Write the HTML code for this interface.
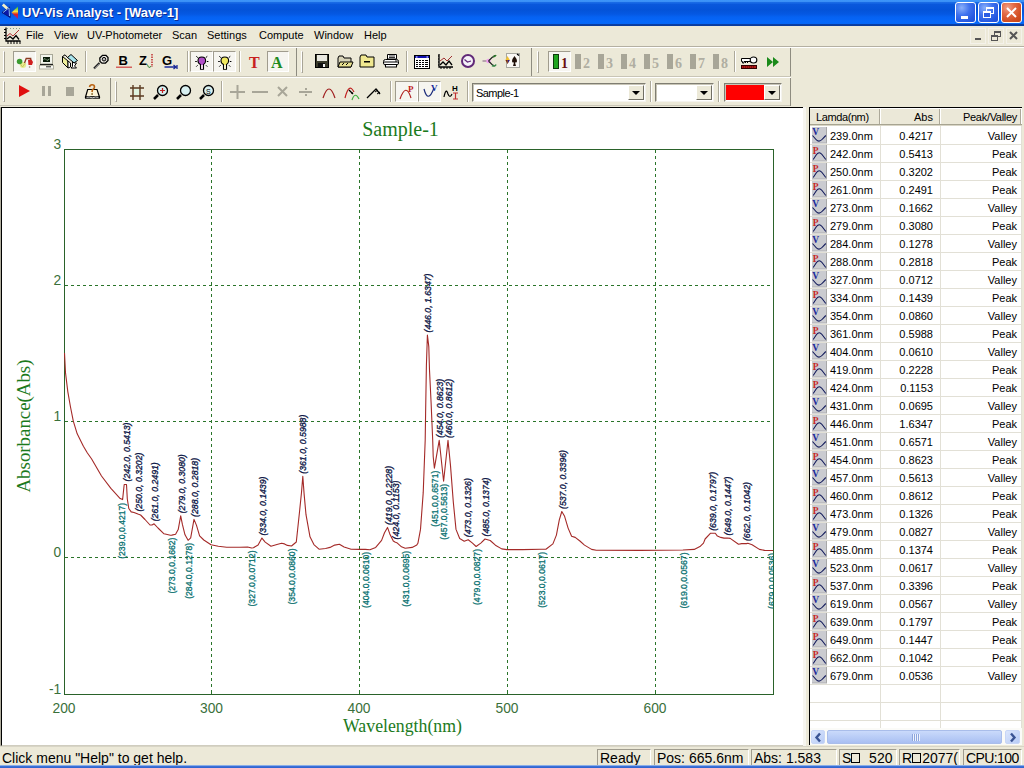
<!DOCTYPE html><html><head><meta charset="utf-8"><style>
*{margin:0;padding:0;box-sizing:border-box}
html,body{width:1024px;height:768px;overflow:hidden;background:#ECE9D8;font-family:"Liberation Sans",sans-serif;position:relative}
.a{position:absolute}
#title{left:0;top:0;width:1024px;height:26px;background:linear-gradient(to bottom,#3C95FA 0px,#3A8EF5 2px,#1767E0 2px,#1A6EEA 3px,#0A58DC 4px,#0453D8 10px,#0558E2 14px,#0662F2 17px,#0668FA 22px,#0566F5 24px,#0A40A8 24px,#0A3A9A 26px)}
.mi{top:29px;font-size:11px;line-height:13px;color:#000;white-space:nowrap}
.grip{width:2px;border-left:1px solid #fff;border-top:1px solid #fff;border-right:1px solid #A8A496;border-bottom:1px solid #A8A496}
.sep{width:2px;border-left:1px solid #ACA899;border-right:1px solid #fff}
.btnp{background:#F6F5F0;border:1px solid;border-color:#A09C8E #fff #fff #A09C8E}
.tbend{width:1px;background:#8E8C80}
.ic{width:16px;height:16px;overflow:visible}
.st{top:749px;height:16px;border-top:1px solid #A09C8E;border-left:1px solid #A09C8E;border-right:1px solid #fff;font-size:14px;line-height:16px;color:#000;white-space:nowrap;padding-left:2px;overflow:hidden}
.tr{font-size:11px;color:#000;white-space:nowrap;line-height:13px}
</style></head><body>
<div id="title" class="a"></div>
<div class="a" style="left:2px;top:3px;width:17px;height:18px"><svg width="17" height="18" viewBox="0 0 17 18" style="display:block;overflow:visible"><defs><linearGradient id="rbw" x1="0" y1="0" x2="0" y2="1"><stop offset="0" stop-color="#20C040"/><stop offset="0.4" stop-color="#F0E040"/><stop offset="0.62" stop-color="#E02020"/><stop offset="1" stop-color="#9020A0"/></linearGradient></defs><path d="M0,9.5 L7.5,4 L8.2,14.5 Z" fill="#0A18A8" stroke="#06106A" stroke-width="0.8"/><path d="M1,9.5 L7,4.8 L7.5,13" fill="none" stroke="#98D0FA" stroke-width="0.9"/><path d="M0.8,1.5 L5.2,5.5" stroke="#F4F0C8" stroke-width="2.8"/><path d="M9.5,9.5 L16,3.5 L16,16 Z" fill="url(#rbw)"/></svg></div>
<div class="a" style="left:22px;top:5px;font:bold 13px/16px 'Liberation Sans',sans-serif;color:#fff;text-shadow:1px 1px 0 #0C2C96;white-space:nowrap">UV-Vis Analyst - [Wave-1]</div>
<div class="a" style="left:955px;top:2px;width:21px;height:21px;border:1px solid #fff;border-radius:3px;background:radial-gradient(circle at 30% 25%,#8AB0FA 0,#3F72EE 40%,#2558E0 75%,#1E50D8 100%)"><svg width="19" height="19" viewBox="0 0 19 19" style="display:block;overflow:visible"><rect x="5" y="13" width="7" height="3" fill="#fff"/></svg></div>
<div class="a" style="left:978px;top:2px;width:21px;height:21px;border:1px solid #fff;border-radius:3px;background:radial-gradient(circle at 30% 25%,#8AB0FA 0,#3F72EE 40%,#2558E0 75%,#1E50D8 100%)"><svg width="19" height="19" viewBox="0 0 19 19" style="display:block;overflow:visible"><rect x="7.5" y="4.5" width="7" height="6" fill="none" stroke="#fff" stroke-width="1"/><rect x="7" y="4" width="8" height="2" fill="#fff"/><rect x="4.5" y="8.5" width="7" height="6" fill="#2A5CE4" stroke="#fff" stroke-width="1"/><rect x="4" y="8" width="8" height="2" fill="#fff"/></svg></div>
<div class="a" style="left:1001px;top:2px;width:21px;height:21px;border:1px solid #fff;border-radius:3px;background:radial-gradient(circle at 30% 25%,#F0A088 0,#E26A45 35%,#D24E22 70%,#C24418 100%)"><svg width="19" height="19" viewBox="0 0 19 19" style="display:block;overflow:visible"><path d="M5,5 L14,14 M14,5 L5,14" stroke="#fff" stroke-width="2"/></svg></div>
<div class="a" style="left:4px;top:27px;width:18px;height:17px"><svg width="17" height="17" viewBox="0 0 17 17" style="display:block;overflow:visible"><path d="M2,0.5 V14 H16.5" fill="none" stroke="#000" stroke-width="1.3"/><path d="M0,2.5H2M0,5.5H2M0,8.5H2M0,11.5H2M4,14V17M7,14V17M10,14V17M13,14V17M16,14V17" stroke="#000" stroke-width="1"/><path d="M3,9 L6,6.5 L9,9 L15,3" fill="none" stroke="#B03030" stroke-width="1"/><path d="M3,12 L6,9.5 L9,12 L12,8.5 L15,12.5" fill="none" stroke="#000" stroke-width="1.3"/><path d="M3,1.5H16" stroke="#8AA08A" stroke-width="1" stroke-dasharray="1,2"/></svg></div>
<div class="a mi" style="left:26px">File</div>
<div class="a mi" style="left:54px">View</div>
<div class="a mi" style="left:87px">UV-Photometer</div>
<div class="a mi" style="left:172px">Scan</div>
<div class="a mi" style="left:207px">Settings</div>
<div class="a mi" style="left:259px">Compute</div>
<div class="a mi" style="left:314px">Window</div>
<div class="a mi" style="left:364px">Help</div>
<div class="a" style="left:970px;top:28px;width:16px;height:16px"><svg width="16" height="16" viewBox="0 0 16 16" style="display:block;overflow:visible"><rect x="0.5" y="0.5" width="15" height="15" fill="none" stroke="#F4F2EA"/><rect x="5" y="10" width="6" height="2" fill="#555"/></svg></div>
<div class="a" style="left:988px;top:28px;width:16px;height:16px"><svg width="16" height="16" viewBox="0 0 16 16" style="display:block;overflow:visible"><rect x="0.5" y="0.5" width="15" height="15" fill="none" stroke="#F4F2EA"/><rect x="6.5" y="3.5" width="6" height="5" fill="none" stroke="#555"/><rect x="6" y="3" width="7" height="2" fill="#555"/><rect x="3.5" y="7.5" width="6" height="5" fill="#ECE9D8" stroke="#555"/><rect x="3" y="7" width="7" height="2" fill="#555"/></svg></div>
<div class="a" style="left:1006px;top:28px;width:16px;height:16px"><svg width="16" height="16" viewBox="0 0 16 16" style="display:block;overflow:visible"><rect x="0.5" y="0.5" width="15" height="15" fill="none" stroke="#F4F2EA"/><path d="M4,4 L11,11 M11,4 L4,11" stroke="#555" stroke-width="2"/></svg></div>
<div class="a" style="left:0;top:46px;width:1024px;height:1px;background:#B4B0A2"></div>
<div class="a" style="left:0;top:47px;width:1024px;height:1px;background:#FFFFFF"></div>
<div class="a" style="left:0;top:76px;width:791px;height:1px;background:#C9C5B6"></div>
<div class="a" style="left:0;top:77px;width:791px;height:1px;background:#FFFFFF"></div>
<div class="a" style="left:0;top:105px;width:791px;height:1px;background:#C9C5B6"></div>
<div class="a grip" style="left:3px;top:51px;height:22px"></div>
<div class="a btnp" style="left:13px;top:51px;width:23px;height:21px"></div>
<div class="a" style="left:17px;top:54px;width:16px;height:16px"><svg width="16" height="16" viewBox="0 0 16 16" style="display:block;overflow:visible"><ellipse cx="6" cy="11" rx="3.2" ry="3" fill="#E8EC90"/><path d="M3.5,10 L5.5,13 L8,9.5" fill="none" stroke="#C8C860" stroke-width="1"/><ellipse cx="2.6" cy="7.5" rx="2.8" ry="2.8" fill="#3C9A30"/><path d="M7.5,9 L9.2,4.5 L13.7,4.5 L13.7,6" fill="none" stroke="#8A3A20" stroke-width="1.3"/><path d="M11,6 L14.5,5.5 L16,8 L15,11 L11.5,11 Z" fill="#D02020"/><circle cx="12.6" cy="13" r="0.8" fill="#9A7A70"/></svg></div>
<div class="a" style="left:38px;top:54px;width:16px;height:16px"><svg width="16" height="16" viewBox="0 0 16 16" style="display:block;overflow:visible"><rect x="2.5" y="0.5" width="12" height="9.5" fill="#F2F4EC" stroke="#A8A898"/><rect x="5" y="3" width="7" height="5" fill="#081808"/><path d="M5.5,5.5 L7,4.5 L9,6.5 L11.5,5" stroke="#9ABE9A" stroke-width="0.8" fill="none"/><rect x="2" y="10" width="13" height="1.4" fill="#101010"/><rect x="1.5" y="11.4" width="14" height="3.6" fill="#F8F8F2" stroke="#B0B0A0"/><rect x="8" y="12.3" width="5" height="1" fill="#222"/></svg></div>
<div class="a" style="left:62px;top:54px;width:16px;height:16px"><svg width="16" height="16" viewBox="0 0 16 16" style="display:block;overflow:visible"><path d="M0.5,2.5 L0.5,8.5 L6,14 L6,7 Z" fill="#EEEE9A" stroke="#000"/><path d="M0.5,2.5 L3,0.8 L6,4" fill="none" stroke="#000"/><path d="M5.5,3.5 L9,0.5 L15.5,6.5 L12,8.8 Z" fill="#A8E4EC" stroke="#000"/><path d="M6,7 L8.5,9 L8.5,13 L6,14 Z" fill="#fff" stroke="#000"/><path d="M10.5,8 L10.5,12.5 L9,14 L14.5,14 L12.5,12 L14.5,9 L12,8.8 Z" fill="#fff" stroke="#000"/></svg></div>
<div class="a sep" style="left:85px;top:51px;height:21px"></div>
<div class="a" style="left:93px;top:54px;width:16px;height:16px"><svg width="16" height="16" viewBox="0 0 16 16" style="display:block;overflow:visible"><path d="M1,14.5 L6.5,9" stroke="#222" stroke-width="2.2"/><path d="M1.8,14.5 L6.5,9.8" stroke="#ddd" stroke-width="0.7"/><path d="M7,7.5 L6.8,4 L9.5,1.3 L13,1.3 L15,3.5 L15,6.5 L12.5,9 L9,9.2 Z" fill="#F0EEE6" stroke="#000" stroke-width="1.3"/><circle cx="11" cy="5.2" r="1.8" fill="#bbb" stroke="#000" stroke-width="1"/></svg></div>
<div class="a" style="left:116px;top:54px;width:16px;height:16px"><svg width="16" height="16" viewBox="0 0 16 16" style="display:block;overflow:visible"><text x="2.6" y="10.6" font-family="Liberation Sans" font-weight="bold" font-size="13" fill="#000">B</text><rect x="0" y="12.6" width="16" height="1.2" fill="#D04040"/></svg></div>
<div class="a" style="left:139px;top:54px;width:16px;height:16px"><svg width="16" height="16" viewBox="0 0 16 16" style="display:block;overflow:visible"><text x="0" y="10.6" font-family="Liberation Sans" font-size="13" fill="#000" font-weight="bold">Z</text><path d="M8.5,10.5 Q8.5,13.5 11,13.5 L12,12" stroke="#3A8A3A" fill="none"/><path d="M13,0 V13" stroke="#C03030" stroke-width="1.5" stroke-dasharray="1.5,1"/></svg></div>
<div class="a" style="left:162px;top:54px;width:16px;height:16px"><svg width="16" height="16" viewBox="0 0 16 16" style="display:block;overflow:visible"><text x="0" y="10.6" font-family="Liberation Sans" font-weight="bold" font-size="13" fill="#000">G</text><path d="M2.5,13 H14 M11.5,11 L14,13 L11.5,15 M15,11 V15" stroke="#1A2A9A" stroke-width="1.3" fill="none"/></svg></div>
<div class="a sep" style="left:187px;top:51px;height:21px"></div>
<div class="a btnp" style="left:190px;top:51px;width:23px;height:21px"></div>
<div class="a btnp" style="left:213px;top:51px;width:23px;height:21px"></div>
<div class="a" style="left:193px;top:54px;width:16px;height:16px"><svg width="16" height="16" viewBox="0 0 16 16" style="display:block;overflow:visible"><path d="M7.5,15.3 L7.5,10.5 Q5,9.5 5,6.8 Q5,3 8.8,3 Q12.6,3 12.6,6.8 Q12.6,9.5 10.5,10.5 L10.5,15.3 Z" fill="#B050C8" stroke="#000" stroke-width="1.1"/><rect x="8.2" y="11" width="1.6" height="4" fill="#FAF6F0"/><path d="M3.3,2.3 L4.8,3.6 M14.3,2.3 L12.8,3.6 M2.2,7.5 H3.8 M13.8,7.5 H15.4 M3.3,12.6 L4.6,11.3 M14.3,12.6 L13,11.3" stroke="#000" stroke-width="1"/></svg></div>
<div class="a" style="left:216px;top:54px;width:16px;height:16px"><svg width="16" height="16" viewBox="0 0 16 16" style="display:block;overflow:visible"><path d="M7.5,15.3 L7.5,10.5 Q5,9.5 5,6.8 Q5,3 8.8,3 Q12.6,3 12.6,6.8 Q12.6,9.5 10.5,10.5 L10.5,15.3 Z" fill="#F0E860" stroke="#000" stroke-width="1.1"/><rect x="8.2" y="11" width="1.6" height="4" fill="#FAF6F0"/><path d="M3.3,2.3 L4.8,3.6 M14.3,2.3 L12.8,3.6 M2.2,7.5 H3.8 M13.8,7.5 H15.4 M3.3,12.6 L4.6,11.3 M14.3,12.6 L13,11.3" stroke="#000" stroke-width="1"/></svg></div>
<div class="a sep" style="left:239px;top:51px;height:21px"></div>
<div class="a" style="left:247px;top:54px;width:16px;height:16px"><svg width="16" height="16" viewBox="0 0 16 16" style="display:block;overflow:visible"><text x="2" y="14" font-family="Liberation Serif" font-weight="bold" font-size="16" fill="#C82020">T</text></svg></div>
<div class="a btnp" style="left:267px;top:51px;width:22px;height:21px"></div>
<div class="a" style="left:270px;top:54px;width:16px;height:16px"><svg width="16" height="16" viewBox="0 0 16 16" style="display:block;overflow:visible"><text x="1" y="14" font-family="Liberation Serif" font-weight="bold" font-size="16" fill="#208A20">A</text></svg></div>
<div class="a tbend" style="left:296px;top:48px;height:28px"></div>
<div class="a grip" style="left:301px;top:51px;height:22px"></div>
<div class="a" style="left:314px;top:53px;width:16px;height:16px"><svg width="16" height="16" viewBox="0 0 16 16" style="display:block;overflow:visible"><rect x="1.5" y="1.5" width="13" height="13" fill="#3A3A2A" stroke="#000"/><rect x="3" y="2" width="10" height="6" fill="#E8E8E0"/><rect x="4" y="10" width="7" height="4" fill="#101010"/><rect x="9" y="11" width="2" height="3" fill="#F0F0F0"/></svg></div>
<div class="a" style="left:337px;top:53px;width:16px;height:16px"><svg width="16" height="16" viewBox="0 0 16 16" style="display:block;overflow:visible"><path d="M1,5 L2,3 L6,3 L7,5 L14,5 L14,14 L1,14Z" fill="#D8D4B8" stroke="#000"/><path d="M3,9 L16,9 L14,14 L1,14Z" fill="#E8E090" stroke="#000"/><path d="M5,12 L7,10 M9,12 L11,10" stroke="#000"/></svg></div>
<div class="a" style="left:359px;top:53px;width:16px;height:16px"><svg width="16" height="16" viewBox="0 0 16 16" style="display:block;overflow:visible"><path d="M1,4 L2,2 L7,2 L8,4 L15,4 L15,14 L1,14Z" fill="#F0E890" stroke="#000"/><rect x="5" y="8" width="6" height="1.5" fill="#000"/></svg></div>
<div class="a" style="left:383px;top:53px;width:16px;height:16px"><svg width="16" height="16" viewBox="0 0 16 16" style="display:block;overflow:visible"><path d="M4.5,1.5 L13.5,1.5 L13.5,6 L4.5,6Z" fill="#fff" stroke="#000"/><path d="M6,3H12M6,4.5H12" stroke="#000" stroke-width="0.8"/><rect x="0.5" y="6.5" width="15" height="5.5" rx="2" fill="#fff" stroke="#000"/><path d="M1,9H15" stroke="#000"/><rect x="2.5" y="11.5" width="11" height="2.5" fill="#fff" stroke="#000"/><circle cx="13" cy="8" r="0.8" fill="#000"/></svg></div>
<div class="a sep" style="left:406px;top:51px;height:21px"></div>
<div class="a" style="left:414px;top:54px;width:16px;height:16px"><svg width="16" height="16" viewBox="0 0 16 16" style="display:block;overflow:visible"><rect x="0.5" y="1.5" width="15" height="13" fill="#fff" stroke="#000" stroke-width="1"/><rect x="0" y="1" width="16" height="1" fill="#000"/><rect x="1" y="2" width="14" height="2" fill="#1010B0"/><rect x="2" y="2.5" width="1.5" height="1" fill="#fff"/><rect x="12.5" y="2.5" width="1.5" height="1" fill="#fff"/><rect x="2" y="6" width="2" height="1" fill="#000"/><rect x="5" y="6" width="2" height="1" fill="#000"/><rect x="8" y="6" width="2" height="1" fill="#000"/><rect x="11" y="6" width="3" height="1" fill="#000"/><rect x="2" y="8" width="2" height="1" fill="#000"/><rect x="5" y="8" width="2" height="1" fill="#000"/><rect x="8" y="8" width="2" height="1" fill="#000"/><rect x="11" y="8" width="3" height="1" fill="#000"/><rect x="2" y="10" width="2" height="1" fill="#000"/><rect x="5" y="10" width="2" height="1" fill="#000"/><rect x="8" y="10" width="2" height="1" fill="#000"/><rect x="11" y="10" width="3" height="1" fill="#000"/><rect x="2" y="12" width="2" height="1" fill="#000"/><rect x="5" y="12" width="2" height="1" fill="#000"/><rect x="8" y="12" width="2" height="1" fill="#000"/><rect x="11" y="12" width="3" height="1" fill="#000"/><rect x="0" y="14" width="16" height="1" fill="#000"/></svg></div>
<div class="a" style="left:437px;top:53px;width:16px;height:16px"><svg width="16" height="16" viewBox="0 0 16 16" style="display:block;overflow:visible"><path d="M2,1 V14 H16" fill="none" stroke="#000" stroke-width="1.3"/><path d="M1,3H2M1,6H2M1,9H2M1,12H2M4,14V16M7,14V16M10,14V16M13,14V16" stroke="#000"/><path d="M3,8 L7,5 L10,8 L15,3" fill="none" stroke="#A03030"/><path d="M3,12 L6,9 L9,12 L12,8 L15,12" fill="none" stroke="#000" stroke-width="1.3"/></svg></div>
<div class="a" style="left:460px;top:53px;width:16px;height:16px"><svg width="16" height="16" viewBox="0 0 16 16" style="display:block;overflow:visible"><circle cx="8" cy="8" r="6" fill="#F4F0F8" stroke="#602878" stroke-width="2"/><path d="M4.5,6.5 L7.5,9 L11,8" fill="none" stroke="#602878" stroke-width="1.2"/></svg></div>
<div class="a" style="left:482px;top:53px;width:16px;height:16px"><svg width="16" height="16" viewBox="0 0 16 16" style="display:block;overflow:visible"><path d="M0.5,8 L7,8" stroke="#806080" stroke-width="1"/><circle cx="6.5" cy="8" r="2.3" fill="#F0A0F0"/><path d="M6.5,8 L10,4.5 L13,2.5 M6.5,8 L10,11.5 L12.5,13" stroke="#202020" stroke-width="1.1" fill="none"/><path d="M11,3.5 Q13,4 14,2" stroke="#2A7A2A" stroke-width="1.6" fill="none"/><path d="M10,12.5 Q13,14 14,11.5" stroke="#3A8A4A" stroke-width="1.6" fill="none"/></svg></div>
<div class="a" style="left:505px;top:53px;width:16px;height:16px"><svg width="16" height="16" viewBox="0 0 16 16" style="display:block;overflow:visible"><rect x="1.5" y="0.5" width="13" height="14" fill="#FAF8F4" stroke="#A8A8A0"/><path d="M0.5,7 L2.5,3 L4.8,7 L2.5,11 Z" fill="#F0C030"/><path d="M2.5,7 L4.8,7 L2.5,11 Z" fill="#2A1890"/><path d="M0.5,7 L2.5,11 L2.5,7Z" fill="#702010"/><path d="M9.5,3 Q12,6 12,8 Q12,10 10,9.5 L11,13 L8,13 L9,9.5 Q7,10 7,8 Q7,6 9.5,3Z" fill="#201008"/><path d="M12,1 L14,2.5" stroke="#000" stroke-width="1.3"/></svg></div>
<div class="a tbend" style="left:531px;top:48px;height:28px"></div>
<div class="a grip" style="left:537px;top:51px;height:22px"></div>
<div class="a btnp" style="left:548px;top:51px;width:23px;height:21px"></div>
<div class="a" style="left:553px;top:54px;width:6px;height:15px;background:#1FA51F;border:1px solid #0B3B0B"></div>
<div class="a" style="left:561px;top:57px;font:bold 14px/14px 'Liberation Serif',serif;color:#6A1010">1</div>
<div class="a" style="left:575px;top:54px;width:6px;height:15px;background:#A8A698"></div>
<div class="a" style="left:583px;top:57px;font:bold 14px/14px 'Liberation Serif',serif;color:#B0AEA2">2</div>
<div class="a" style="left:598px;top:54px;width:6px;height:15px;background:#A8A698"></div>
<div class="a" style="left:606px;top:57px;font:bold 14px/14px 'Liberation Serif',serif;color:#B0AEA2">3</div>
<div class="a" style="left:621px;top:54px;width:6px;height:15px;background:#A8A698"></div>
<div class="a" style="left:629px;top:57px;font:bold 14px/14px 'Liberation Serif',serif;color:#B0AEA2">4</div>
<div class="a" style="left:644px;top:54px;width:6px;height:15px;background:#A8A698"></div>
<div class="a" style="left:652px;top:57px;font:bold 14px/14px 'Liberation Serif',serif;color:#B0AEA2">5</div>
<div class="a" style="left:667px;top:54px;width:6px;height:15px;background:#A8A698"></div>
<div class="a" style="left:675px;top:57px;font:bold 14px/14px 'Liberation Serif',serif;color:#B0AEA2">6</div>
<div class="a" style="left:690px;top:54px;width:6px;height:15px;background:#A8A698"></div>
<div class="a" style="left:698px;top:57px;font:bold 14px/14px 'Liberation Serif',serif;color:#B0AEA2">7</div>
<div class="a" style="left:713px;top:54px;width:6px;height:15px;background:#A8A698"></div>
<div class="a" style="left:721px;top:57px;font:bold 14px/14px 'Liberation Serif',serif;color:#B0AEA2">8</div>
<div class="a sep" style="left:734px;top:51px;height:21px"></div>
<div class="a" style="left:741px;top:54px;width:16px;height:16px"><svg width="16" height="16" viewBox="0 0 16 16" style="display:block;overflow:visible"><path d="M0.5,4.5 L10,4.5 L10,7.5 L3,7.5 L3,9 L1.5,9 L1.5,7.5 L0.5,7.5 Z" fill="#fff" stroke="#000" stroke-width="1"/><path d="M4.5,7.5V9M6.5,7.5V9" stroke="#000"/><ellipse cx="12.5" cy="6" rx="3.3" ry="3" fill="#fff" stroke="#000" stroke-width="1.2"/><rect x="0.5" y="11.5" width="15" height="3" fill="#B01818" stroke="#300" stroke-width="1"/><path d="M2,13H14" stroke="#500" stroke-dasharray="1,1"/></svg></div>
<div class="a" style="left:765px;top:54px;width:16px;height:16px"><svg width="16" height="16" viewBox="0 0 16 16" style="display:block;overflow:visible"><path d="M2,3 L8,8 L2,13Z M8,3 L14,8 L8,13Z" fill="#1A8A1A"/></svg></div>
<div class="a tbend" style="left:790px;top:48px;height:28px"></div>
<div class="a grip" style="left:3px;top:81px;height:21px"></div>
<div class="a" style="left:16px;top:83px;width:16px;height:16px"><svg width="16" height="16" viewBox="0 0 16 16" style="display:block;overflow:visible"><path d="M3,2 L14,8 L3,14Z" fill="#E01010"/></svg></div>
<div class="a" style="left:39px;top:83px;width:16px;height:16px"><svg width="16" height="16" viewBox="0 0 16 16" style="display:block;overflow:visible"><rect x="3" y="3" width="3" height="10" fill="#A8A698"/><rect x="9" y="3" width="3" height="10" fill="#A8A698"/></svg></div>
<div class="a" style="left:62px;top:83px;width:16px;height:16px"><svg width="16" height="16" viewBox="0 0 16 16" style="display:block;overflow:visible"><rect x="4" y="4" width="8" height="9" fill="#A8A698"/></svg></div>
<div class="a" style="left:85px;top:83px;width:16px;height:16px"><svg width="16" height="16" viewBox="0 0 16 16" style="display:block;overflow:visible"><path d="M2.7,6.5 L12,6.5 L14.5,14 L0.5,14 Z" fill="#FCF4D8" stroke="#000" stroke-width="1.2"/><path d="M4.5,4 Q5,1.8 7,1.8 Q9.5,1.8 9.5,4 Q9.5,5.5 7.5,6.8 L7,9" fill="none" stroke="#B86010" stroke-width="1.6"/><rect x="6.3" y="10.2" width="1.6" height="1.6" fill="#806020"/><rect x="0" y="13.3" width="15" height="2.4" fill="#000"/><path d="M1.5,14.4 Q4,13.6 7.3,14.8 Q10.5,13.6 13.5,14.4" fill="none" stroke="#fff" stroke-width="0.8"/></svg></div>
<div class="a tbend" style="left:110px;top:78px;height:27px"></div>
<div class="a grip" style="left:115px;top:81px;height:21px"></div>
<div class="a" style="left:129px;top:84px;width:16px;height:16px"><svg width="16" height="16" viewBox="0 0 16 16" style="display:block;overflow:visible"><path d="M4,1V16M11,1V16M1,4H15M1,12H15" stroke="#5A3A20" stroke-width="1.4"/><rect x="5" y="5" width="5" height="6" fill="#E0F4E0"/></svg></div>
<div class="a" style="left:153px;top:84px;width:16px;height:16px"><svg width="16" height="16" viewBox="0 0 16 16" style="display:block;overflow:visible"><path d="M1,15 L5,11" stroke="#000" stroke-width="2.5"/><circle cx="9.5" cy="6.5" r="5" fill="#D8F0F0" stroke="#000" stroke-width="1.3"/><path d="M7,6.5H12M9.5,4V9" stroke="#C02020" stroke-width="1.2"/></svg></div>
<div class="a" style="left:176px;top:84px;width:16px;height:16px"><svg width="16" height="16" viewBox="0 0 16 16" style="display:block;overflow:visible"><path d="M1,15 L5,11" stroke="#000" stroke-width="2.5"/><circle cx="9.5" cy="6.5" r="5" fill="#D8F0F0" stroke="#000" stroke-width="1.3"/></svg></div>
<div class="a" style="left:199px;top:84px;width:16px;height:16px"><svg width="16" height="16" viewBox="0 0 16 16" style="display:block;overflow:visible"><path d="M1,15 L5,11" stroke="#000" stroke-width="2.5"/><circle cx="9.5" cy="6.5" r="5" fill="#D8F0F0" stroke="#000" stroke-width="1.3"/><text x="7" y="9.5" font-family="Liberation Sans" font-size="7" fill="#000">S</text></svg></div>
<div class="a sep" style="left:221px;top:81px;height:21px"></div>
<div class="a" style="left:229px;top:84px;width:16px;height:16px"><svg width="16" height="16" viewBox="0 0 16 16" style="display:block;overflow:visible"><path d="M1,8H16M8.5,1V15" stroke="#A8A698" stroke-width="2"/></svg></div>
<div class="a" style="left:252px;top:84px;width:16px;height:16px"><svg width="16" height="16" viewBox="0 0 16 16" style="display:block;overflow:visible"><path d="M0,8H16" stroke="#A8A698" stroke-width="2"/></svg></div>
<div class="a" style="left:275px;top:84px;width:16px;height:16px"><svg width="16" height="16" viewBox="0 0 16 16" style="display:block;overflow:visible"><path d="M3,3L12,12M12,3L3,12" stroke="#A8A698" stroke-width="2"/></svg></div>
<div class="a" style="left:298px;top:84px;width:16px;height:16px"><svg width="16" height="16" viewBox="0 0 16 16" style="display:block;overflow:visible"><path d="M1,8H14" stroke="#A8A698" stroke-width="2"/><rect x="7" y="4" width="2" height="2" fill="#A8A698"/><rect x="7" y="10" width="2" height="2" fill="#A8A698"/></svg></div>
<div class="a" style="left:321px;top:84px;width:16px;height:16px"><svg width="16" height="16" viewBox="0 0 16 16" style="display:block;overflow:visible"><path d="M2,14 Q8,-4 14,14" fill="none" stroke="#A02020" stroke-width="1.2"/></svg></div>
<div class="a" style="left:344px;top:84px;width:16px;height:16px"><svg width="16" height="16" viewBox="0 0 16 16" style="display:block;overflow:visible"><path d="M1,14 Q5,-2 10,8" fill="none" stroke="#C02020" stroke-width="1.2"/><path d="M5,6 L9,10" stroke="#000" stroke-width="1.2"/><path d="M9,10 L7,10 L9,8Z" fill="#000"/><path d="M8,16 Q11,7 15,15" fill="none" stroke="#40B040" stroke-width="1.2"/></svg></div>
<div class="a" style="left:366px;top:84px;width:16px;height:16px"><svg width="16" height="16" viewBox="0 0 16 16" style="display:block;overflow:visible"><path d="M1,14 L10,5 L14,10" fill="none" stroke="#000" stroke-width="1.3"/><path d="M9,8 L12,6 M11,10 L14,8" stroke="#000"/></svg></div>
<div class="a sep" style="left:390px;top:81px;height:21px"></div>
<div class="a btnp" style="left:395px;top:81px;width:23px;height:21px"></div>
<div class="a btnp" style="left:418px;top:81px;width:23px;height:21px"></div>
<div class="a" style="left:399px;top:84px;width:16px;height:16px"><svg width="16" height="16" viewBox="0 0 16 16" style="display:block;overflow:visible"><path d="M1,15 Q7,-2 12,14" fill="none" stroke="#B02020" stroke-width="1.2"/><text x="9" y="8" font-family="Liberation Serif" font-weight="bold" font-size="9" fill="#C02020">P</text></svg></div>
<div class="a" style="left:422px;top:84px;width:16px;height:16px"><svg width="16" height="16" viewBox="0 0 16 16" style="display:block;overflow:visible"><path d="M2,5 Q6,20 12,4" fill="none" stroke="#1A2A7A" stroke-width="1.2"/><text x="9" y="7" font-family="Liberation Serif" font-weight="bold" font-size="9" fill="#1A2A9A">V</text></svg></div>
<div class="a" style="left:443px;top:84px;width:16px;height:16px"><svg width="16" height="16" viewBox="0 0 16 16" style="display:block;overflow:visible"><path d="M1,13 Q3,3 5,10 Q7,15 9,10" fill="none" stroke="#000" stroke-width="1.2"/><text x="9" y="7" font-family="Liberation Sans" font-weight="bold" font-size="8" fill="#000">H</text><path d="M10,9H15M12.5,9V15M10,15H15" stroke="#C03030" stroke-width="1.2"/></svg></div>
<div class="a sep" style="left:467px;top:81px;height:21px"></div>
<div class="a" style="left:472px;top:83px;width:174px;height:19px;background:#fff;border:1px solid;border-color:#7F7D72 #F4F3EE #F4F3EE #7F7D72;box-shadow:inset 1px 1px 0 #C8C5B6"><div class="a" style="left:3px;top:3px;font-size:11px;line-height:13px;letter-spacing:-0.55px;color:#000">Sample-1</div></div>
<div class="a" style="left:628px;top:85px;width:16px;height:15px;background:#ECE9D8;border:1px solid;border-color:#fff #716F64 #716F64 #fff"><div class="a" style="left:3px;top:5px;width:0;height:0;border-left:4px solid transparent;border-right:4px solid transparent;border-top:4px solid #000"></div></div>
<div class="a sep" style="left:650px;top:81px;height:21px"></div>
<div class="a" style="left:655px;top:83px;width:59px;height:19px;background:#fff;border:1px solid;border-color:#7F7D72 #F4F3EE #F4F3EE #7F7D72;box-shadow:inset 1px 1px 0 #C8C5B6"></div>
<div class="a" style="left:696px;top:85px;width:16px;height:15px;background:#ECE9D8;border:1px solid;border-color:#fff #716F64 #716F64 #fff"><div class="a" style="left:3px;top:5px;width:0;height:0;border-left:4px solid transparent;border-right:4px solid transparent;border-top:4px solid #000"></div></div>
<div class="a sep" style="left:718px;top:81px;height:21px"></div>
<div class="a" style="left:724px;top:83px;width:58px;height:19px;background:#fff;border:1px solid;border-color:#7F7D72 #F4F3EE #F4F3EE #7F7D72;box-shadow:inset 1px 1px 0 #C8C5B6"><div class="a" style="left:1px;top:1px;width:39px;height:15px;background:#FF0000"></div></div>
<div class="a" style="left:764px;top:85px;width:16px;height:15px;background:#ECE9D8;border:1px solid;border-color:#fff #716F64 #716F64 #fff"><div class="a" style="left:3px;top:5px;width:0;height:0;border-left:4px solid transparent;border-right:4px solid transparent;border-top:4px solid #000"></div></div>
<div class="a tbend" style="left:790px;top:78px;height:28px"></div>
<div class="a" style="left:1px;top:107px;width:802px;height:639px;background:#fff;border-top:1px solid #000;border-left:1px solid #000;border-bottom:1px solid #D0CDBF"></div>
<div class="a" style="left:803px;top:107px;width:3px;height:639px;background:#F6F5EF"></div>
<div class="a" style="left:0;top:107px;width:1px;height:639px;background:#B0AD9E"></div>
<svg class="a" style="left:0;top:0" width="806" height="746" viewBox="0 0 806 746"><defs><clipPath id="pc"><rect x="64" y="149" width="709.5" height="545.5"/></clipPath></defs><line x1="211.5" y1="150" x2="211.5" y2="694" stroke="#2A742A" stroke-width="1" stroke-dasharray="3,3"/><line x1="359.5" y1="150" x2="359.5" y2="694" stroke="#2A742A" stroke-width="1" stroke-dasharray="3,3"/><line x1="507.5" y1="150" x2="507.5" y2="694" stroke="#2A742A" stroke-width="1" stroke-dasharray="3,3"/><line x1="655.5" y1="150" x2="655.5" y2="694" stroke="#2A742A" stroke-width="1" stroke-dasharray="3,3"/><line x1="65" y1="285.5" x2="773" y2="285.5" stroke="#2A742A" stroke-width="1" stroke-dasharray="3,3"/><line x1="65" y1="421.5" x2="773" y2="421.5" stroke="#2A742A" stroke-width="1" stroke-dasharray="3,3"/><line x1="65" y1="557.5" x2="773" y2="557.5" stroke="#2A742A" stroke-width="1" stroke-dasharray="3,3"/><rect x="64.5" y="149.5" width="709" height="545" fill="none" stroke="#2A622A" stroke-width="1"/><line x1="211.5" y1="690" x2="211.5" y2="694" stroke="#2A742A" stroke-width="1"/><line x1="359.5" y1="690" x2="359.5" y2="694" stroke="#2A742A" stroke-width="1"/><line x1="507.5" y1="690" x2="507.5" y2="694" stroke="#2A742A" stroke-width="1"/><line x1="655.5" y1="690" x2="655.5" y2="694" stroke="#2A742A" stroke-width="1"/><text x="61.3" y="149" text-anchor="end" font-family="Liberation Sans" font-size="15" fill="#3A703A" transform="translate(61.3,0) scale(0.92,1) translate(-61.3,0)">3</text><text x="61.3" y="285" text-anchor="end" font-family="Liberation Sans" font-size="15" fill="#3A703A" transform="translate(61.3,0) scale(0.92,1) translate(-61.3,0)">2</text><text x="61.3" y="421" text-anchor="end" font-family="Liberation Sans" font-size="15" fill="#3A703A" transform="translate(61.3,0) scale(0.92,1) translate(-61.3,0)">1</text><text x="61.3" y="557" text-anchor="end" font-family="Liberation Sans" font-size="15" fill="#3A703A" transform="translate(61.3,0) scale(0.92,1) translate(-61.3,0)">0</text><text x="61.3" y="694" text-anchor="end" font-family="Liberation Sans" font-size="15" fill="#3A703A" transform="translate(61.3,0) scale(0.92,1) translate(-61.3,0)">-1</text><text x="64" y="713" text-anchor="middle" font-family="Liberation Sans" font-size="15" fill="#3A703A" transform="translate(64,0) scale(0.92,1) translate(-64,0)">200</text><text x="211.5" y="713" text-anchor="middle" font-family="Liberation Sans" font-size="15" fill="#3A703A" transform="translate(211.5,0) scale(0.92,1) translate(-211.5,0)">300</text><text x="359" y="713" text-anchor="middle" font-family="Liberation Sans" font-size="15" fill="#3A703A" transform="translate(359,0) scale(0.92,1) translate(-359,0)">400</text><text x="507" y="713" text-anchor="middle" font-family="Liberation Sans" font-size="15" fill="#3A703A" transform="translate(507,0) scale(0.92,1) translate(-507,0)">500</text><text x="655" y="713" text-anchor="middle" font-family="Liberation Sans" font-size="15" fill="#3A703A" transform="translate(655,0) scale(0.92,1) translate(-655,0)">600</text><text x="400.5" y="135.5" text-anchor="middle" font-family="Liberation Serif" font-size="20" fill="#1C7A1C">Sample-1</text><text x="402.5" y="731.5" text-anchor="middle" font-family="Liberation Serif" font-size="18" fill="#1C7A1C" textLength="119" lengthAdjust="spacingAndGlyphs">Wavelength(nm)</text><text transform="translate(29.5,426) rotate(-90)" text-anchor="middle" font-family="Liberation Serif" font-size="18.5" fill="#1C7A1C" textLength="133" lengthAdjust="spacingAndGlyphs">Absorbance(Abs)</text><g clip-path="url(#pc)"><path d="M64.5,353.0 L65.5,372.8 L67.8,391.6 L70.5,407.0 L73.3,421.2 L77.2,433.8 L83.4,446.2 L87.4,453.0 L91.5,458.8 L101.5,476.0 L110.9,488.4 L120.2,498.6 L122.6,499.6 L123.6,490.0 L124.2,484.5 L126.5,484.5 L127.3,499.0 L128.8,508.5 L131.2,511.9 L134.0,512.5 L137.9,514.1 L140.6,515.0 L145.0,519.5 L150.0,525.0 L152.0,525.0 L154.1,523.8 L158.0,528.0 L164.0,533.8 L170.4,535.3 L171.8,535.1 L175.6,534.3 L178.2,529.6 L180.7,515.8 L182.4,524.4 L185.0,534.8 L188.1,540.3 L190.7,537.9 L194.0,519.4 L196.5,525.4 L199.6,535.8 L203.8,540.0 L211.0,544.7 L218.3,546.2 L226.7,547.3 L240.0,547.3 L247.6,547.0 L251.6,548.0 L253.4,547.8 L258.1,545.0 L261.9,538.1 L265.2,542.1 L271.0,546.2 L276.9,544.5 L281.6,543.3 L284.5,543.9 L287.4,545.4 L291.5,546.0 L296.3,542.0 L299.5,512.0 L301.5,492.5 L302.8,476.3 L304.1,493.9 L306.0,514.7 L310.0,536.8 L313.9,544.6 L319.0,549.2 L325.6,548.5 L330.0,547.4 L334.7,545.1 L339.4,544.2 L344.1,547.0 L351.1,549.2 L359.3,549.4 L365.3,549.4 L369.9,549.8 L375.7,547.4 L381.6,540.4 L384.5,532.8 L387.5,527.4 L389.8,533.9 L393.3,541.0 L394.9,542.0 L396.8,542.7 L401.5,546.8 L405.2,548.3 L412.1,547.4 L416.8,544.9 L417.9,543.3 L420.5,529.4 L423.2,492.9 L425.2,440.0 L425.6,413.8 L426.4,365.3 L427.4,335.0 L428.8,346.6 L429.5,370.0 L431.1,402.8 L431.9,421.5 L432.7,440.0 L433.2,456.5 L434.4,468.2 L439.2,440.3 L443.6,481.3 L448.0,440.4 L450.5,465.6 L453.3,502.0 L456.0,529.4 L459.7,538.5 L464.2,541.2 L468.2,539.7 L472.5,543.1 L476.1,546.5 L480.8,543.1 L485.0,539.0 L490.2,540.5 L495.4,545.2 L501.7,548.9 L506.9,549.6 L522.5,549.6 L541.1,549.3 L545.9,549.2 L552.9,543.9 L556.4,535.1 L559.3,519.9 L561.8,511.5 L564.6,516.3 L568.1,528.1 L571.6,536.3 L575.2,537.4 L579.9,541.0 L584.5,545.1 L591.6,549.4 L596.3,550.3 L640.0,550.4 L682.9,550.0 L694.2,549.4 L700.4,546.2 L703.5,543.1 L705.1,539.0 L710.6,533.2 L712.4,533.2 L715.3,533.2 L717.4,536.1 L720.8,537.4 L724.0,538.1 L727.2,538.0 L730.2,538.4 L738.5,544.2 L741.7,543.6 L746.4,543.6 L747.9,543.3 L752.1,544.7 L759.4,549.4 L764.6,550.4 L771.5,550.5 L773.0,550.5" fill="none" stroke="#A42A28" stroke-width="1.1" stroke-linejoin="round"/><text transform="translate(125.2,558.8) rotate(-90)" font-family="Liberation Sans" font-size="9.5" fill="#087070" stroke="#087070" stroke-width="0.3" textLength="56" lengthAdjust="spacingAndGlyphs">(239.0,0.4217)</text><text transform="translate(130.0,481.5) rotate(-90)" font-family="Liberation Sans" font-style="italic" font-size="9.5" fill="#101848" stroke="#101848" stroke-width="0.35" textLength="59" lengthAdjust="spacingAndGlyphs">(242.0, 0.5413)</text><text transform="translate(141.9,511.6) rotate(-90)" font-family="Liberation Sans" font-style="italic" font-size="9.5" fill="#101848" stroke="#101848" stroke-width="0.35" textLength="59" lengthAdjust="spacingAndGlyphs">(250.0, 0.3202)</text><text transform="translate(158.1,521.3) rotate(-90)" font-family="Liberation Sans" font-style="italic" font-size="9.5" fill="#101848" stroke="#101848" stroke-width="0.35" textLength="59" lengthAdjust="spacingAndGlyphs">(261.0, 0.2491)</text><text transform="translate(175.4,593.6) rotate(-90)" font-family="Liberation Sans" font-size="9.5" fill="#087070" stroke="#087070" stroke-width="0.3" textLength="56" lengthAdjust="spacingAndGlyphs">(273.0,0.1662)</text><text transform="translate(184.7,513.3) rotate(-90)" font-family="Liberation Sans" font-style="italic" font-size="9.5" fill="#101848" stroke="#101848" stroke-width="0.35" textLength="59" lengthAdjust="spacingAndGlyphs">(279.0, 0.3080)</text><text transform="translate(191.7,598.8) rotate(-90)" font-family="Liberation Sans" font-size="9.5" fill="#087070" stroke="#087070" stroke-width="0.3" textLength="56" lengthAdjust="spacingAndGlyphs">(284.0,0.1278)</text><text transform="translate(198.0,516.9) rotate(-90)" font-family="Liberation Sans" font-style="italic" font-size="9.5" fill="#101848" stroke="#101848" stroke-width="0.35" textLength="59" lengthAdjust="spacingAndGlyphs">(288.0, 0.2818)</text><text transform="translate(255.2,606.5) rotate(-90)" font-family="Liberation Sans" font-size="9.5" fill="#087070" stroke="#087070" stroke-width="0.3" textLength="56" lengthAdjust="spacingAndGlyphs">(327.0,0.0712)</text><text transform="translate(265.9,535.6) rotate(-90)" font-family="Liberation Sans" font-style="italic" font-size="9.5" fill="#101848" stroke="#101848" stroke-width="0.35" textLength="59" lengthAdjust="spacingAndGlyphs">(334.0, 0.1439)</text><text transform="translate(295.1,604.5) rotate(-90)" font-family="Liberation Sans" font-size="9.5" fill="#087070" stroke="#087070" stroke-width="0.3" textLength="56" lengthAdjust="spacingAndGlyphs">(354.0,0.0860)</text><text transform="translate(305.8,473.7) rotate(-90)" font-family="Liberation Sans" font-style="italic" font-size="9.5" fill="#101848" stroke="#101848" stroke-width="0.35" textLength="59" lengthAdjust="spacingAndGlyphs">(361.0, 0.5988)</text><text transform="translate(368.9,607.9) rotate(-90)" font-family="Liberation Sans" font-size="9.5" fill="#087070" stroke="#087070" stroke-width="0.3" textLength="56" lengthAdjust="spacingAndGlyphs">(404.0,0.0610)</text><text transform="translate(391.5,524.9) rotate(-90)" font-family="Liberation Sans" font-style="italic" font-size="9.5" fill="#101848" stroke="#101848" stroke-width="0.35" textLength="59" lengthAdjust="spacingAndGlyphs">(419.0, 0.2228)</text><text transform="translate(398.9,539.5) rotate(-90)" font-family="Liberation Sans" font-style="italic" font-size="9.5" fill="#101848" stroke="#101848" stroke-width="0.35" textLength="59" lengthAdjust="spacingAndGlyphs">(424.0, 0.1153)</text><text transform="translate(408.8,606.8) rotate(-90)" font-family="Liberation Sans" font-size="9.5" fill="#087070" stroke="#087070" stroke-width="0.3" textLength="56" lengthAdjust="spacingAndGlyphs">(431.0,0.0695)</text><text transform="translate(431.4,332.5) rotate(-90)" font-family="Liberation Sans" font-style="italic" font-size="9.5" fill="#101848" stroke="#101848" stroke-width="0.35" textLength="59" lengthAdjust="spacingAndGlyphs">(446.0, 1.6347)</text><text transform="translate(438.4,526.7) rotate(-90)" font-family="Liberation Sans" font-size="9.5" fill="#087070" stroke="#087070" stroke-width="0.3" textLength="56" lengthAdjust="spacingAndGlyphs">(451.0,0.6571)</text><text transform="translate(443.2,437.8) rotate(-90)" font-family="Liberation Sans" font-style="italic" font-size="9.5" fill="#101848" stroke="#101848" stroke-width="0.35" textLength="59" lengthAdjust="spacingAndGlyphs">(454.0, 0.8623)</text><text transform="translate(447.2,539.8) rotate(-90)" font-family="Liberation Sans" font-size="9.5" fill="#087070" stroke="#087070" stroke-width="0.3" textLength="56" lengthAdjust="spacingAndGlyphs">(457.0,0.5613)</text><text transform="translate(452.0,437.9) rotate(-90)" font-family="Liberation Sans" font-style="italic" font-size="9.5" fill="#101848" stroke="#101848" stroke-width="0.35" textLength="59" lengthAdjust="spacingAndGlyphs">(460.0, 0.8612)</text><text transform="translate(471.2,537.2) rotate(-90)" font-family="Liberation Sans" font-style="italic" font-size="9.5" fill="#101848" stroke="#101848" stroke-width="0.35" textLength="59" lengthAdjust="spacingAndGlyphs">(473.0, 0.1326)</text><text transform="translate(479.7,605.0) rotate(-90)" font-family="Liberation Sans" font-size="9.5" fill="#087070" stroke="#087070" stroke-width="0.3" textLength="56" lengthAdjust="spacingAndGlyphs">(479.0,0.0827)</text><text transform="translate(489.0,536.5) rotate(-90)" font-family="Liberation Sans" font-style="italic" font-size="9.5" fill="#101848" stroke="#101848" stroke-width="0.35" textLength="59" lengthAdjust="spacingAndGlyphs">(485.0, 0.1374)</text><text transform="translate(544.7,607.8) rotate(-90)" font-family="Liberation Sans" font-size="9.5" fill="#087070" stroke="#087070" stroke-width="0.3" textLength="56" lengthAdjust="spacingAndGlyphs">(523.0,0.0617)</text><text transform="translate(565.8,509.0) rotate(-90)" font-family="Liberation Sans" font-style="italic" font-size="9.5" fill="#101848" stroke="#101848" stroke-width="0.35" textLength="59" lengthAdjust="spacingAndGlyphs">(537.0, 0.3396)</text><text transform="translate(686.5,608.5) rotate(-90)" font-family="Liberation Sans" font-size="9.5" fill="#087070" stroke="#087070" stroke-width="0.3" textLength="56" lengthAdjust="spacingAndGlyphs">(619.0,0.0567)</text><text transform="translate(716.4,530.8) rotate(-90)" font-family="Liberation Sans" font-style="italic" font-size="9.5" fill="#101848" stroke="#101848" stroke-width="0.35" textLength="59" lengthAdjust="spacingAndGlyphs">(639.0, 0.1797)</text><text transform="translate(731.2,535.5) rotate(-90)" font-family="Liberation Sans" font-style="italic" font-size="9.5" fill="#101848" stroke="#101848" stroke-width="0.35" textLength="59" lengthAdjust="spacingAndGlyphs">(649.0, 0.1447)</text><text transform="translate(750.4,541.1) rotate(-90)" font-family="Liberation Sans" font-style="italic" font-size="9.5" fill="#101848" stroke="#101848" stroke-width="0.35" textLength="59" lengthAdjust="spacingAndGlyphs">(662.0, 0.1042)</text><text transform="translate(775.1,608.9) rotate(-90)" font-family="Liberation Sans" font-size="9.5" fill="#087070" stroke="#087070" stroke-width="0.3" textLength="56" lengthAdjust="spacingAndGlyphs">(679.0,0.0536)</text></g></svg>
<div class="a" style="left:809px;top:107px;width:213px;height:638px;background:#fff;border-top:1px solid #000;border-left:1px solid #000"></div>
<div class="a" style="left:810px;top:108px;width:212px;height:17px;background:#EBE8D8;border-top:1px solid #fff"></div>
<div class="a" style="left:810px;top:124px;width:212px;height:1px;background:#A7A491"></div>
<div class="a" style="left:810px;top:125px;width:212px;height:1px;background:#D8D5C6"></div>
<div class="a" style="left:879px;top:109px;width:1px;height:15px;background:#ACA899"></div>
<div class="a" style="left:880px;top:109px;width:1px;height:15px;background:#fff"></div>
<div class="a" style="left:939px;top:109px;width:1px;height:15px;background:#ACA899"></div>
<div class="a" style="left:940px;top:109px;width:1px;height:15px;background:#fff"></div>
<div class="a" style="left:1020px;top:109px;width:1px;height:15px;background:#ACA899"></div>
<div class="a" style="left:1021px;top:109px;width:1px;height:15px;background:#fff"></div>
<div class="a tr" style="left:816px;top:111px;letter-spacing:-0.4px">Lamda(nm)</div>
<div class="a tr" style="right:91px;top:111px">Abs</div>
<div class="a tr" style="right:7px;top:111px;letter-spacing:-0.3px">Peak/Valley</div>
<div class="a" style="left:810px;top:144px;width:212px;height:1px;background:#E2E0D6"></div>
<div class="a" style="left:810px;top:162px;width:212px;height:1px;background:#E2E0D6"></div>
<div class="a" style="left:810px;top:180px;width:212px;height:1px;background:#E2E0D6"></div>
<div class="a" style="left:810px;top:198px;width:212px;height:1px;background:#E2E0D6"></div>
<div class="a" style="left:810px;top:216px;width:212px;height:1px;background:#E2E0D6"></div>
<div class="a" style="left:810px;top:234px;width:212px;height:1px;background:#E2E0D6"></div>
<div class="a" style="left:810px;top:252px;width:212px;height:1px;background:#E2E0D6"></div>
<div class="a" style="left:810px;top:270px;width:212px;height:1px;background:#E2E0D6"></div>
<div class="a" style="left:810px;top:288px;width:212px;height:1px;background:#E2E0D6"></div>
<div class="a" style="left:810px;top:306px;width:212px;height:1px;background:#E2E0D6"></div>
<div class="a" style="left:810px;top:324px;width:212px;height:1px;background:#E2E0D6"></div>
<div class="a" style="left:810px;top:342px;width:212px;height:1px;background:#E2E0D6"></div>
<div class="a" style="left:810px;top:360px;width:212px;height:1px;background:#E2E0D6"></div>
<div class="a" style="left:810px;top:378px;width:212px;height:1px;background:#E2E0D6"></div>
<div class="a" style="left:810px;top:396px;width:212px;height:1px;background:#E2E0D6"></div>
<div class="a" style="left:810px;top:414px;width:212px;height:1px;background:#E2E0D6"></div>
<div class="a" style="left:810px;top:432px;width:212px;height:1px;background:#E2E0D6"></div>
<div class="a" style="left:810px;top:450px;width:212px;height:1px;background:#E2E0D6"></div>
<div class="a" style="left:810px;top:468px;width:212px;height:1px;background:#E2E0D6"></div>
<div class="a" style="left:810px;top:486px;width:212px;height:1px;background:#E2E0D6"></div>
<div class="a" style="left:810px;top:504px;width:212px;height:1px;background:#E2E0D6"></div>
<div class="a" style="left:810px;top:522px;width:212px;height:1px;background:#E2E0D6"></div>
<div class="a" style="left:810px;top:540px;width:212px;height:1px;background:#E2E0D6"></div>
<div class="a" style="left:810px;top:558px;width:212px;height:1px;background:#E2E0D6"></div>
<div class="a" style="left:810px;top:576px;width:212px;height:1px;background:#E2E0D6"></div>
<div class="a" style="left:810px;top:594px;width:212px;height:1px;background:#E2E0D6"></div>
<div class="a" style="left:810px;top:612px;width:212px;height:1px;background:#E2E0D6"></div>
<div class="a" style="left:810px;top:630px;width:212px;height:1px;background:#E2E0D6"></div>
<div class="a" style="left:810px;top:648px;width:212px;height:1px;background:#E2E0D6"></div>
<div class="a" style="left:810px;top:666px;width:212px;height:1px;background:#E2E0D6"></div>
<div class="a" style="left:810px;top:684px;width:212px;height:1px;background:#E2E0D6"></div>
<div class="a" style="left:810px;top:702px;width:212px;height:1px;background:#E2E0D6"></div>
<div class="a" style="left:810px;top:720px;width:212px;height:1px;background:#E2E0D6"></div>
<div class="a" style="left:880px;top:126px;width:1px;height:602px;background:#E2E0D6"></div>
<div class="a" style="left:940px;top:126px;width:1px;height:602px;background:#E2E0D6"></div>
<div class="a" style="left:1021px;top:126px;width:1px;height:602px;background:#E2E0D6"></div>
<div class="a" style="left:812px;top:127px;width:16px;height:17px"><svg width="16" height="17" viewBox="0 0 16 17" style="display:block;overflow:visible"><rect x="0" y="0" width="15" height="16" fill="#CACBD0"/><rect x="14" y="0" width="1" height="16" fill="#A8A8A8"/><rect x="0" y="15.5" width="15" height="1" fill="#B0B0B0"/><path d="M0.5,8.5 L4,12.5 Q7,15.8 10,12.5 L13.8,8.5" fill="none" stroke="#10185A" stroke-width="1.1"/><text x="0.3" y="8" font-family="Liberation Serif" font-weight="bold" font-size="9.5" fill="#1A2A9A">V</text></svg></div>
<div class="a tr" style="left:830px;top:130px">239.0nm</div>
<div class="a tr" style="right:91px;top:130px">0.4217</div>
<div class="a tr" style="right:7px;top:130px">Valley</div>
<div class="a" style="left:812px;top:145px;width:16px;height:17px"><svg width="16" height="17" viewBox="0 0 16 17" style="display:block;overflow:visible"><rect x="0" y="0" width="15" height="16" fill="#CACBD0"/><rect x="14" y="0" width="1" height="16" fill="#A8A8A8"/><rect x="0" y="15.5" width="15" height="1" fill="#B0B0B0"/><path d="M1.2,14.5 L4.5,9.5 Q7.2,6 10,9.5 L13.8,14.5" fill="none" stroke="#10185A" stroke-width="1.1"/><text x="0.8" y="8.5" font-family="Liberation Serif" font-weight="bold" font-size="9.5" fill="#C82828">P</text></svg></div>
<div class="a tr" style="left:830px;top:148px">242.0nm</div>
<div class="a tr" style="right:91px;top:148px">0.5413</div>
<div class="a tr" style="right:7px;top:148px">Peak</div>
<div class="a" style="left:812px;top:163px;width:16px;height:17px"><svg width="16" height="17" viewBox="0 0 16 17" style="display:block;overflow:visible"><rect x="0" y="0" width="15" height="16" fill="#CACBD0"/><rect x="14" y="0" width="1" height="16" fill="#A8A8A8"/><rect x="0" y="15.5" width="15" height="1" fill="#B0B0B0"/><path d="M1.2,14.5 L4.5,9.5 Q7.2,6 10,9.5 L13.8,14.5" fill="none" stroke="#10185A" stroke-width="1.1"/><text x="0.8" y="8.5" font-family="Liberation Serif" font-weight="bold" font-size="9.5" fill="#C82828">P</text></svg></div>
<div class="a tr" style="left:830px;top:166px">250.0nm</div>
<div class="a tr" style="right:91px;top:166px">0.3202</div>
<div class="a tr" style="right:7px;top:166px">Peak</div>
<div class="a" style="left:812px;top:181px;width:16px;height:17px"><svg width="16" height="17" viewBox="0 0 16 17" style="display:block;overflow:visible"><rect x="0" y="0" width="15" height="16" fill="#CACBD0"/><rect x="14" y="0" width="1" height="16" fill="#A8A8A8"/><rect x="0" y="15.5" width="15" height="1" fill="#B0B0B0"/><path d="M1.2,14.5 L4.5,9.5 Q7.2,6 10,9.5 L13.8,14.5" fill="none" stroke="#10185A" stroke-width="1.1"/><text x="0.8" y="8.5" font-family="Liberation Serif" font-weight="bold" font-size="9.5" fill="#C82828">P</text></svg></div>
<div class="a tr" style="left:830px;top:184px">261.0nm</div>
<div class="a tr" style="right:91px;top:184px">0.2491</div>
<div class="a tr" style="right:7px;top:184px">Peak</div>
<div class="a" style="left:812px;top:199px;width:16px;height:17px"><svg width="16" height="17" viewBox="0 0 16 17" style="display:block;overflow:visible"><rect x="0" y="0" width="15" height="16" fill="#CACBD0"/><rect x="14" y="0" width="1" height="16" fill="#A8A8A8"/><rect x="0" y="15.5" width="15" height="1" fill="#B0B0B0"/><path d="M0.5,8.5 L4,12.5 Q7,15.8 10,12.5 L13.8,8.5" fill="none" stroke="#10185A" stroke-width="1.1"/><text x="0.3" y="8" font-family="Liberation Serif" font-weight="bold" font-size="9.5" fill="#1A2A9A">V</text></svg></div>
<div class="a tr" style="left:830px;top:202px">273.0nm</div>
<div class="a tr" style="right:91px;top:202px">0.1662</div>
<div class="a tr" style="right:7px;top:202px">Valley</div>
<div class="a" style="left:812px;top:217px;width:16px;height:17px"><svg width="16" height="17" viewBox="0 0 16 17" style="display:block;overflow:visible"><rect x="0" y="0" width="15" height="16" fill="#CACBD0"/><rect x="14" y="0" width="1" height="16" fill="#A8A8A8"/><rect x="0" y="15.5" width="15" height="1" fill="#B0B0B0"/><path d="M1.2,14.5 L4.5,9.5 Q7.2,6 10,9.5 L13.8,14.5" fill="none" stroke="#10185A" stroke-width="1.1"/><text x="0.8" y="8.5" font-family="Liberation Serif" font-weight="bold" font-size="9.5" fill="#C82828">P</text></svg></div>
<div class="a tr" style="left:830px;top:220px">279.0nm</div>
<div class="a tr" style="right:91px;top:220px">0.3080</div>
<div class="a tr" style="right:7px;top:220px">Peak</div>
<div class="a" style="left:812px;top:235px;width:16px;height:17px"><svg width="16" height="17" viewBox="0 0 16 17" style="display:block;overflow:visible"><rect x="0" y="0" width="15" height="16" fill="#CACBD0"/><rect x="14" y="0" width="1" height="16" fill="#A8A8A8"/><rect x="0" y="15.5" width="15" height="1" fill="#B0B0B0"/><path d="M0.5,8.5 L4,12.5 Q7,15.8 10,12.5 L13.8,8.5" fill="none" stroke="#10185A" stroke-width="1.1"/><text x="0.3" y="8" font-family="Liberation Serif" font-weight="bold" font-size="9.5" fill="#1A2A9A">V</text></svg></div>
<div class="a tr" style="left:830px;top:238px">284.0nm</div>
<div class="a tr" style="right:91px;top:238px">0.1278</div>
<div class="a tr" style="right:7px;top:238px">Valley</div>
<div class="a" style="left:812px;top:253px;width:16px;height:17px"><svg width="16" height="17" viewBox="0 0 16 17" style="display:block;overflow:visible"><rect x="0" y="0" width="15" height="16" fill="#CACBD0"/><rect x="14" y="0" width="1" height="16" fill="#A8A8A8"/><rect x="0" y="15.5" width="15" height="1" fill="#B0B0B0"/><path d="M1.2,14.5 L4.5,9.5 Q7.2,6 10,9.5 L13.8,14.5" fill="none" stroke="#10185A" stroke-width="1.1"/><text x="0.8" y="8.5" font-family="Liberation Serif" font-weight="bold" font-size="9.5" fill="#C82828">P</text></svg></div>
<div class="a tr" style="left:830px;top:256px">288.0nm</div>
<div class="a tr" style="right:91px;top:256px">0.2818</div>
<div class="a tr" style="right:7px;top:256px">Peak</div>
<div class="a" style="left:812px;top:271px;width:16px;height:17px"><svg width="16" height="17" viewBox="0 0 16 17" style="display:block;overflow:visible"><rect x="0" y="0" width="15" height="16" fill="#CACBD0"/><rect x="14" y="0" width="1" height="16" fill="#A8A8A8"/><rect x="0" y="15.5" width="15" height="1" fill="#B0B0B0"/><path d="M0.5,8.5 L4,12.5 Q7,15.8 10,12.5 L13.8,8.5" fill="none" stroke="#10185A" stroke-width="1.1"/><text x="0.3" y="8" font-family="Liberation Serif" font-weight="bold" font-size="9.5" fill="#1A2A9A">V</text></svg></div>
<div class="a tr" style="left:830px;top:274px">327.0nm</div>
<div class="a tr" style="right:91px;top:274px">0.0712</div>
<div class="a tr" style="right:7px;top:274px">Valley</div>
<div class="a" style="left:812px;top:289px;width:16px;height:17px"><svg width="16" height="17" viewBox="0 0 16 17" style="display:block;overflow:visible"><rect x="0" y="0" width="15" height="16" fill="#CACBD0"/><rect x="14" y="0" width="1" height="16" fill="#A8A8A8"/><rect x="0" y="15.5" width="15" height="1" fill="#B0B0B0"/><path d="M1.2,14.5 L4.5,9.5 Q7.2,6 10,9.5 L13.8,14.5" fill="none" stroke="#10185A" stroke-width="1.1"/><text x="0.8" y="8.5" font-family="Liberation Serif" font-weight="bold" font-size="9.5" fill="#C82828">P</text></svg></div>
<div class="a tr" style="left:830px;top:292px">334.0nm</div>
<div class="a tr" style="right:91px;top:292px">0.1439</div>
<div class="a tr" style="right:7px;top:292px">Peak</div>
<div class="a" style="left:812px;top:307px;width:16px;height:17px"><svg width="16" height="17" viewBox="0 0 16 17" style="display:block;overflow:visible"><rect x="0" y="0" width="15" height="16" fill="#CACBD0"/><rect x="14" y="0" width="1" height="16" fill="#A8A8A8"/><rect x="0" y="15.5" width="15" height="1" fill="#B0B0B0"/><path d="M0.5,8.5 L4,12.5 Q7,15.8 10,12.5 L13.8,8.5" fill="none" stroke="#10185A" stroke-width="1.1"/><text x="0.3" y="8" font-family="Liberation Serif" font-weight="bold" font-size="9.5" fill="#1A2A9A">V</text></svg></div>
<div class="a tr" style="left:830px;top:310px">354.0nm</div>
<div class="a tr" style="right:91px;top:310px">0.0860</div>
<div class="a tr" style="right:7px;top:310px">Valley</div>
<div class="a" style="left:812px;top:325px;width:16px;height:17px"><svg width="16" height="17" viewBox="0 0 16 17" style="display:block;overflow:visible"><rect x="0" y="0" width="15" height="16" fill="#CACBD0"/><rect x="14" y="0" width="1" height="16" fill="#A8A8A8"/><rect x="0" y="15.5" width="15" height="1" fill="#B0B0B0"/><path d="M1.2,14.5 L4.5,9.5 Q7.2,6 10,9.5 L13.8,14.5" fill="none" stroke="#10185A" stroke-width="1.1"/><text x="0.8" y="8.5" font-family="Liberation Serif" font-weight="bold" font-size="9.5" fill="#C82828">P</text></svg></div>
<div class="a tr" style="left:830px;top:328px">361.0nm</div>
<div class="a tr" style="right:91px;top:328px">0.5988</div>
<div class="a tr" style="right:7px;top:328px">Peak</div>
<div class="a" style="left:812px;top:343px;width:16px;height:17px"><svg width="16" height="17" viewBox="0 0 16 17" style="display:block;overflow:visible"><rect x="0" y="0" width="15" height="16" fill="#CACBD0"/><rect x="14" y="0" width="1" height="16" fill="#A8A8A8"/><rect x="0" y="15.5" width="15" height="1" fill="#B0B0B0"/><path d="M0.5,8.5 L4,12.5 Q7,15.8 10,12.5 L13.8,8.5" fill="none" stroke="#10185A" stroke-width="1.1"/><text x="0.3" y="8" font-family="Liberation Serif" font-weight="bold" font-size="9.5" fill="#1A2A9A">V</text></svg></div>
<div class="a tr" style="left:830px;top:346px">404.0nm</div>
<div class="a tr" style="right:91px;top:346px">0.0610</div>
<div class="a tr" style="right:7px;top:346px">Valley</div>
<div class="a" style="left:812px;top:361px;width:16px;height:17px"><svg width="16" height="17" viewBox="0 0 16 17" style="display:block;overflow:visible"><rect x="0" y="0" width="15" height="16" fill="#CACBD0"/><rect x="14" y="0" width="1" height="16" fill="#A8A8A8"/><rect x="0" y="15.5" width="15" height="1" fill="#B0B0B0"/><path d="M1.2,14.5 L4.5,9.5 Q7.2,6 10,9.5 L13.8,14.5" fill="none" stroke="#10185A" stroke-width="1.1"/><text x="0.8" y="8.5" font-family="Liberation Serif" font-weight="bold" font-size="9.5" fill="#C82828">P</text></svg></div>
<div class="a tr" style="left:830px;top:364px">419.0nm</div>
<div class="a tr" style="right:91px;top:364px">0.2228</div>
<div class="a tr" style="right:7px;top:364px">Peak</div>
<div class="a" style="left:812px;top:379px;width:16px;height:17px"><svg width="16" height="17" viewBox="0 0 16 17" style="display:block;overflow:visible"><rect x="0" y="0" width="15" height="16" fill="#CACBD0"/><rect x="14" y="0" width="1" height="16" fill="#A8A8A8"/><rect x="0" y="15.5" width="15" height="1" fill="#B0B0B0"/><path d="M1.2,14.5 L4.5,9.5 Q7.2,6 10,9.5 L13.8,14.5" fill="none" stroke="#10185A" stroke-width="1.1"/><text x="0.8" y="8.5" font-family="Liberation Serif" font-weight="bold" font-size="9.5" fill="#C82828">P</text></svg></div>
<div class="a tr" style="left:830px;top:382px">424.0nm</div>
<div class="a tr" style="right:91px;top:382px">0.1153</div>
<div class="a tr" style="right:7px;top:382px">Peak</div>
<div class="a" style="left:812px;top:397px;width:16px;height:17px"><svg width="16" height="17" viewBox="0 0 16 17" style="display:block;overflow:visible"><rect x="0" y="0" width="15" height="16" fill="#CACBD0"/><rect x="14" y="0" width="1" height="16" fill="#A8A8A8"/><rect x="0" y="15.5" width="15" height="1" fill="#B0B0B0"/><path d="M0.5,8.5 L4,12.5 Q7,15.8 10,12.5 L13.8,8.5" fill="none" stroke="#10185A" stroke-width="1.1"/><text x="0.3" y="8" font-family="Liberation Serif" font-weight="bold" font-size="9.5" fill="#1A2A9A">V</text></svg></div>
<div class="a tr" style="left:830px;top:400px">431.0nm</div>
<div class="a tr" style="right:91px;top:400px">0.0695</div>
<div class="a tr" style="right:7px;top:400px">Valley</div>
<div class="a" style="left:812px;top:415px;width:16px;height:17px"><svg width="16" height="17" viewBox="0 0 16 17" style="display:block;overflow:visible"><rect x="0" y="0" width="15" height="16" fill="#CACBD0"/><rect x="14" y="0" width="1" height="16" fill="#A8A8A8"/><rect x="0" y="15.5" width="15" height="1" fill="#B0B0B0"/><path d="M1.2,14.5 L4.5,9.5 Q7.2,6 10,9.5 L13.8,14.5" fill="none" stroke="#10185A" stroke-width="1.1"/><text x="0.8" y="8.5" font-family="Liberation Serif" font-weight="bold" font-size="9.5" fill="#C82828">P</text></svg></div>
<div class="a tr" style="left:830px;top:418px">446.0nm</div>
<div class="a tr" style="right:91px;top:418px">1.6347</div>
<div class="a tr" style="right:7px;top:418px">Peak</div>
<div class="a" style="left:812px;top:433px;width:16px;height:17px"><svg width="16" height="17" viewBox="0 0 16 17" style="display:block;overflow:visible"><rect x="0" y="0" width="15" height="16" fill="#CACBD0"/><rect x="14" y="0" width="1" height="16" fill="#A8A8A8"/><rect x="0" y="15.5" width="15" height="1" fill="#B0B0B0"/><path d="M0.5,8.5 L4,12.5 Q7,15.8 10,12.5 L13.8,8.5" fill="none" stroke="#10185A" stroke-width="1.1"/><text x="0.3" y="8" font-family="Liberation Serif" font-weight="bold" font-size="9.5" fill="#1A2A9A">V</text></svg></div>
<div class="a tr" style="left:830px;top:436px">451.0nm</div>
<div class="a tr" style="right:91px;top:436px">0.6571</div>
<div class="a tr" style="right:7px;top:436px">Valley</div>
<div class="a" style="left:812px;top:451px;width:16px;height:17px"><svg width="16" height="17" viewBox="0 0 16 17" style="display:block;overflow:visible"><rect x="0" y="0" width="15" height="16" fill="#CACBD0"/><rect x="14" y="0" width="1" height="16" fill="#A8A8A8"/><rect x="0" y="15.5" width="15" height="1" fill="#B0B0B0"/><path d="M1.2,14.5 L4.5,9.5 Q7.2,6 10,9.5 L13.8,14.5" fill="none" stroke="#10185A" stroke-width="1.1"/><text x="0.8" y="8.5" font-family="Liberation Serif" font-weight="bold" font-size="9.5" fill="#C82828">P</text></svg></div>
<div class="a tr" style="left:830px;top:454px">454.0nm</div>
<div class="a tr" style="right:91px;top:454px">0.8623</div>
<div class="a tr" style="right:7px;top:454px">Peak</div>
<div class="a" style="left:812px;top:469px;width:16px;height:17px"><svg width="16" height="17" viewBox="0 0 16 17" style="display:block;overflow:visible"><rect x="0" y="0" width="15" height="16" fill="#CACBD0"/><rect x="14" y="0" width="1" height="16" fill="#A8A8A8"/><rect x="0" y="15.5" width="15" height="1" fill="#B0B0B0"/><path d="M0.5,8.5 L4,12.5 Q7,15.8 10,12.5 L13.8,8.5" fill="none" stroke="#10185A" stroke-width="1.1"/><text x="0.3" y="8" font-family="Liberation Serif" font-weight="bold" font-size="9.5" fill="#1A2A9A">V</text></svg></div>
<div class="a tr" style="left:830px;top:472px">457.0nm</div>
<div class="a tr" style="right:91px;top:472px">0.5613</div>
<div class="a tr" style="right:7px;top:472px">Valley</div>
<div class="a" style="left:812px;top:487px;width:16px;height:17px"><svg width="16" height="17" viewBox="0 0 16 17" style="display:block;overflow:visible"><rect x="0" y="0" width="15" height="16" fill="#CACBD0"/><rect x="14" y="0" width="1" height="16" fill="#A8A8A8"/><rect x="0" y="15.5" width="15" height="1" fill="#B0B0B0"/><path d="M1.2,14.5 L4.5,9.5 Q7.2,6 10,9.5 L13.8,14.5" fill="none" stroke="#10185A" stroke-width="1.1"/><text x="0.8" y="8.5" font-family="Liberation Serif" font-weight="bold" font-size="9.5" fill="#C82828">P</text></svg></div>
<div class="a tr" style="left:830px;top:490px">460.0nm</div>
<div class="a tr" style="right:91px;top:490px">0.8612</div>
<div class="a tr" style="right:7px;top:490px">Peak</div>
<div class="a" style="left:812px;top:505px;width:16px;height:17px"><svg width="16" height="17" viewBox="0 0 16 17" style="display:block;overflow:visible"><rect x="0" y="0" width="15" height="16" fill="#CACBD0"/><rect x="14" y="0" width="1" height="16" fill="#A8A8A8"/><rect x="0" y="15.5" width="15" height="1" fill="#B0B0B0"/><path d="M1.2,14.5 L4.5,9.5 Q7.2,6 10,9.5 L13.8,14.5" fill="none" stroke="#10185A" stroke-width="1.1"/><text x="0.8" y="8.5" font-family="Liberation Serif" font-weight="bold" font-size="9.5" fill="#C82828">P</text></svg></div>
<div class="a tr" style="left:830px;top:508px">473.0nm</div>
<div class="a tr" style="right:91px;top:508px">0.1326</div>
<div class="a tr" style="right:7px;top:508px">Peak</div>
<div class="a" style="left:812px;top:523px;width:16px;height:17px"><svg width="16" height="17" viewBox="0 0 16 17" style="display:block;overflow:visible"><rect x="0" y="0" width="15" height="16" fill="#CACBD0"/><rect x="14" y="0" width="1" height="16" fill="#A8A8A8"/><rect x="0" y="15.5" width="15" height="1" fill="#B0B0B0"/><path d="M0.5,8.5 L4,12.5 Q7,15.8 10,12.5 L13.8,8.5" fill="none" stroke="#10185A" stroke-width="1.1"/><text x="0.3" y="8" font-family="Liberation Serif" font-weight="bold" font-size="9.5" fill="#1A2A9A">V</text></svg></div>
<div class="a tr" style="left:830px;top:526px">479.0nm</div>
<div class="a tr" style="right:91px;top:526px">0.0827</div>
<div class="a tr" style="right:7px;top:526px">Valley</div>
<div class="a" style="left:812px;top:541px;width:16px;height:17px"><svg width="16" height="17" viewBox="0 0 16 17" style="display:block;overflow:visible"><rect x="0" y="0" width="15" height="16" fill="#CACBD0"/><rect x="14" y="0" width="1" height="16" fill="#A8A8A8"/><rect x="0" y="15.5" width="15" height="1" fill="#B0B0B0"/><path d="M1.2,14.5 L4.5,9.5 Q7.2,6 10,9.5 L13.8,14.5" fill="none" stroke="#10185A" stroke-width="1.1"/><text x="0.8" y="8.5" font-family="Liberation Serif" font-weight="bold" font-size="9.5" fill="#C82828">P</text></svg></div>
<div class="a tr" style="left:830px;top:544px">485.0nm</div>
<div class="a tr" style="right:91px;top:544px">0.1374</div>
<div class="a tr" style="right:7px;top:544px">Peak</div>
<div class="a" style="left:812px;top:559px;width:16px;height:17px"><svg width="16" height="17" viewBox="0 0 16 17" style="display:block;overflow:visible"><rect x="0" y="0" width="15" height="16" fill="#CACBD0"/><rect x="14" y="0" width="1" height="16" fill="#A8A8A8"/><rect x="0" y="15.5" width="15" height="1" fill="#B0B0B0"/><path d="M0.5,8.5 L4,12.5 Q7,15.8 10,12.5 L13.8,8.5" fill="none" stroke="#10185A" stroke-width="1.1"/><text x="0.3" y="8" font-family="Liberation Serif" font-weight="bold" font-size="9.5" fill="#1A2A9A">V</text></svg></div>
<div class="a tr" style="left:830px;top:562px">523.0nm</div>
<div class="a tr" style="right:91px;top:562px">0.0617</div>
<div class="a tr" style="right:7px;top:562px">Valley</div>
<div class="a" style="left:812px;top:577px;width:16px;height:17px"><svg width="16" height="17" viewBox="0 0 16 17" style="display:block;overflow:visible"><rect x="0" y="0" width="15" height="16" fill="#CACBD0"/><rect x="14" y="0" width="1" height="16" fill="#A8A8A8"/><rect x="0" y="15.5" width="15" height="1" fill="#B0B0B0"/><path d="M1.2,14.5 L4.5,9.5 Q7.2,6 10,9.5 L13.8,14.5" fill="none" stroke="#10185A" stroke-width="1.1"/><text x="0.8" y="8.5" font-family="Liberation Serif" font-weight="bold" font-size="9.5" fill="#C82828">P</text></svg></div>
<div class="a tr" style="left:830px;top:580px">537.0nm</div>
<div class="a tr" style="right:91px;top:580px">0.3396</div>
<div class="a tr" style="right:7px;top:580px">Peak</div>
<div class="a" style="left:812px;top:595px;width:16px;height:17px"><svg width="16" height="17" viewBox="0 0 16 17" style="display:block;overflow:visible"><rect x="0" y="0" width="15" height="16" fill="#CACBD0"/><rect x="14" y="0" width="1" height="16" fill="#A8A8A8"/><rect x="0" y="15.5" width="15" height="1" fill="#B0B0B0"/><path d="M0.5,8.5 L4,12.5 Q7,15.8 10,12.5 L13.8,8.5" fill="none" stroke="#10185A" stroke-width="1.1"/><text x="0.3" y="8" font-family="Liberation Serif" font-weight="bold" font-size="9.5" fill="#1A2A9A">V</text></svg></div>
<div class="a tr" style="left:830px;top:598px">619.0nm</div>
<div class="a tr" style="right:91px;top:598px">0.0567</div>
<div class="a tr" style="right:7px;top:598px">Valley</div>
<div class="a" style="left:812px;top:613px;width:16px;height:17px"><svg width="16" height="17" viewBox="0 0 16 17" style="display:block;overflow:visible"><rect x="0" y="0" width="15" height="16" fill="#CACBD0"/><rect x="14" y="0" width="1" height="16" fill="#A8A8A8"/><rect x="0" y="15.5" width="15" height="1" fill="#B0B0B0"/><path d="M1.2,14.5 L4.5,9.5 Q7.2,6 10,9.5 L13.8,14.5" fill="none" stroke="#10185A" stroke-width="1.1"/><text x="0.8" y="8.5" font-family="Liberation Serif" font-weight="bold" font-size="9.5" fill="#C82828">P</text></svg></div>
<div class="a tr" style="left:830px;top:616px">639.0nm</div>
<div class="a tr" style="right:91px;top:616px">0.1797</div>
<div class="a tr" style="right:7px;top:616px">Peak</div>
<div class="a" style="left:812px;top:631px;width:16px;height:17px"><svg width="16" height="17" viewBox="0 0 16 17" style="display:block;overflow:visible"><rect x="0" y="0" width="15" height="16" fill="#CACBD0"/><rect x="14" y="0" width="1" height="16" fill="#A8A8A8"/><rect x="0" y="15.5" width="15" height="1" fill="#B0B0B0"/><path d="M1.2,14.5 L4.5,9.5 Q7.2,6 10,9.5 L13.8,14.5" fill="none" stroke="#10185A" stroke-width="1.1"/><text x="0.8" y="8.5" font-family="Liberation Serif" font-weight="bold" font-size="9.5" fill="#C82828">P</text></svg></div>
<div class="a tr" style="left:830px;top:634px">649.0nm</div>
<div class="a tr" style="right:91px;top:634px">0.1447</div>
<div class="a tr" style="right:7px;top:634px">Peak</div>
<div class="a" style="left:812px;top:649px;width:16px;height:17px"><svg width="16" height="17" viewBox="0 0 16 17" style="display:block;overflow:visible"><rect x="0" y="0" width="15" height="16" fill="#CACBD0"/><rect x="14" y="0" width="1" height="16" fill="#A8A8A8"/><rect x="0" y="15.5" width="15" height="1" fill="#B0B0B0"/><path d="M1.2,14.5 L4.5,9.5 Q7.2,6 10,9.5 L13.8,14.5" fill="none" stroke="#10185A" stroke-width="1.1"/><text x="0.8" y="8.5" font-family="Liberation Serif" font-weight="bold" font-size="9.5" fill="#C82828">P</text></svg></div>
<div class="a tr" style="left:830px;top:652px">662.0nm</div>
<div class="a tr" style="right:91px;top:652px">0.1042</div>
<div class="a tr" style="right:7px;top:652px">Peak</div>
<div class="a" style="left:812px;top:667px;width:16px;height:17px"><svg width="16" height="17" viewBox="0 0 16 17" style="display:block;overflow:visible"><rect x="0" y="0" width="15" height="16" fill="#CACBD0"/><rect x="14" y="0" width="1" height="16" fill="#A8A8A8"/><rect x="0" y="15.5" width="15" height="1" fill="#B0B0B0"/><path d="M0.5,8.5 L4,12.5 Q7,15.8 10,12.5 L13.8,8.5" fill="none" stroke="#10185A" stroke-width="1.1"/><text x="0.3" y="8" font-family="Liberation Serif" font-weight="bold" font-size="9.5" fill="#1A2A9A">V</text></svg></div>
<div class="a tr" style="left:830px;top:670px">679.0nm</div>
<div class="a tr" style="right:91px;top:670px">0.0536</div>
<div class="a tr" style="right:7px;top:670px">Valley</div>
<div class="a" style="left:810px;top:728px;width:212px;height:17px;background:#FBFBF8"></div>
<div class="a" style="left:811px;top:730px;width:14px;height:14px;border-radius:2px;background:linear-gradient(135deg,#DCE6FC,#B8CCF6);border:1px solid #C8D6F6"><svg width="12" height="12" viewBox="0 0 12 12" style="display:block;overflow:visible"><path d="M8,2.5 L4.5,6.5 L8,10.5" fill="none" stroke="#3A5494" stroke-width="2.4"/></svg></div>
<div class="a" style="left:827px;top:730px;width:175px;height:14px;border-radius:2px;background:linear-gradient(to bottom,#CADAFB,#B6CAF6 60%,#A9BEF2);border:1px solid #A9BDEA"><div class="a" style="left:84px;top:3px;width:8px;height:7px;background:repeating-linear-gradient(to right,#8EA6DC 0,#8EA6DC 1px,#EEF3FE 1px,#EEF3FE 2px)"></div></div>
<div class="a" style="left:1005px;top:730px;width:15px;height:14px;border-radius:2px;background:linear-gradient(135deg,#DCE6FC,#B8CCF6);border:1px solid #C8D6F6"><svg width="12" height="12" viewBox="0 0 12 12" style="display:block;overflow:visible"><path d="M5,2.5 L8.5,6.5 L5,10.5" fill="none" stroke="#3A5494" stroke-width="2.4"/></svg></div>
<div class="a" style="left:0;top:746px;width:1024px;height:1px;background:#D8D5C6"></div>
<div class="a" style="left:2px;top:750px;font-size:14px;line-height:16px;white-space:nowrap;color:#000">Click menu "Help" to get help.</div>
<div class="a st" style="left:597px;width:54px">Ready</div>
<div class="a st" style="left:654px;width:95px">Pos: 665.6nm</div>
<div class="a st" style="left:751px;width:86px">Abs: 1.583</div>
<div class="a st" style="left:839px;width:58px">S<span style="display:inline-block;width:9px;height:10px;border:1px solid #000;margin:0 1px 0 0;vertical-align:0px"></span>&nbsp; 520</div>
<div class="a st" style="left:899px;width:61px">R<span style="display:inline-block;width:9px;height:10px;border:1px solid #000;margin:0 1px 0 0;vertical-align:0px"></span>2077(</div>
<div class="a st" style="left:963px;width:59px"><span style="letter-spacing:-0.6px">CPU:100</span></div>
<div class="a" style="left:0;top:765px;width:1024px;height:3px;background:linear-gradient(to bottom,#8AAEE8 0,#8AAEE8 1px,#3F74D8 1px,#2E62D0 3px)"></div>
</body></html>
